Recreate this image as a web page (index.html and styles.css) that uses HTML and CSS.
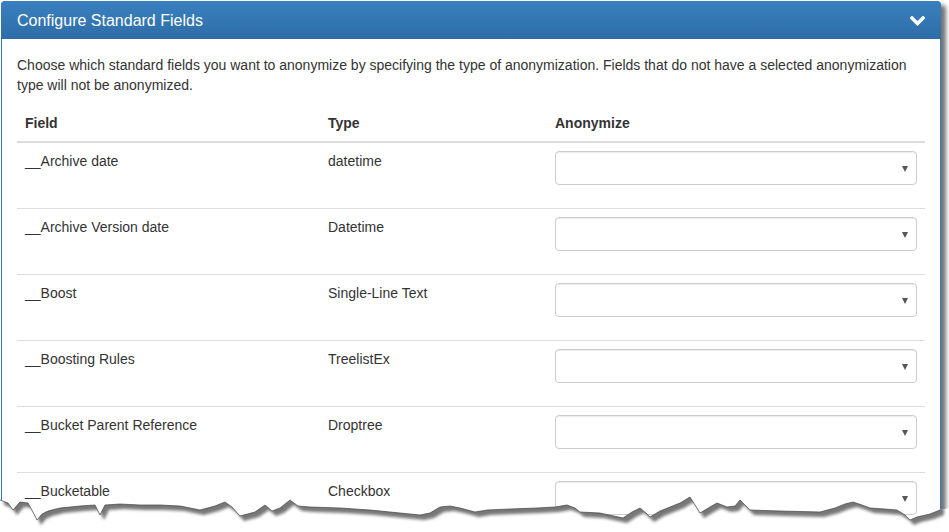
FILE: index.html
```html
<!DOCTYPE html>
<html lang="en">
<head>
<meta charset="utf-8">
<title>Configure Standard Fields</title>
<link rel="stylesheet" href="styles.css">
</head>
<body>
<div class="page">
  <div class="panel">
    <div class="panel-heading">
      <h3 class="panel-title">Configure Standard Fields</h3>
      <svg class="chevron" width="15" height="10" viewBox="0 0 15 10" aria-hidden="true">
        <polyline points="2,2 7.5,7.5 13,2" fill="none" stroke="#fff" stroke-width="3.4" stroke-linecap="square"/>
      </svg>
    </div>
    <div class="panel-body">
      <p class="intro">Choose which standard fields you want to anonymize by specifying the type of anonymization. Fields that do not have a selected anonymization type will not be anonymized.</p>
      <table class="fields">
        <colgroup>
          <col class="c-field"><col class="c-type"><col class="c-anon">
        </colgroup>
        <thead>
          <tr><th>Field</th><th>Type</th><th>Anonymize</th></tr>
        </thead>
        <tbody>
          <tr><td>__Archive date</td><td>datetime</td><td><div class="form-group"><div class="select-wrap"><select class="form-control"><option></option></select></div></div></td></tr>
          <tr><td>__Archive Version date</td><td>Datetime</td><td><div class="form-group"><div class="select-wrap"><select class="form-control"><option></option></select></div></div></td></tr>
          <tr><td>__Boost</td><td>Single-Line Text</td><td><div class="form-group"><div class="select-wrap"><select class="form-control"><option></option></select></div></div></td></tr>
          <tr><td>__Boosting Rules</td><td>TreelistEx</td><td><div class="form-group"><div class="select-wrap"><select class="form-control"><option></option></select></div></div></td></tr>
          <tr><td>__Bucket Parent Reference</td><td>Droptree</td><td><div class="form-group"><div class="select-wrap"><select class="form-control"><option></option></select></div></div></td></tr>
          <tr><td>__Bucketable</td><td>Checkbox</td><td><div class="form-group"><div class="select-wrap"><select class="form-control"><option></option></select></div></div></td></tr>
        </tbody>
      </table>
    </div>
  </div>
  <svg class="tear" width="949" height="54" viewBox="0 0 949 54" aria-hidden="true">
    <defs>
      <clipPath id="below">
        <polygon points="0,22 8,25 13,32 20,24 28,25 33,34 37,42 42,36 48,33 60,30 80,28 95,27 100,37 105,27 120,26 140,27 160,27 180,28 200,32 215,28 225,24 232,29 240,38 255,34 265,27 272,33 280,30 290,22 298,28 310,29 340,30 370,32 400,35 420,37 430,35 440,29 450,28 460,30 475,34 487,32 510,31 537,30 555,29 567,27 575,30 580,34 600,35 623,40 632,34 640,30 646,35 650,39 660,33 670,29 680,25 690,19 700,35 710,29 717,25 727,29 735,28 740,22 750,32 780,33 820,34 835,30 845,26 853,24 862,27 870,30 885,31 897,32 905,37 910,42 917,39 930,36 940,32 949,30 949,54 0,54"/>
      </clipPath>
      <filter id="soft" x="-5%" y="-50%" width="110%" height="200%">
        <feGaussianBlur stdDeviation="1.6"/>
      </filter>
    </defs>
    <polygon fill="#fff" points="0,22 8,25 13,32 20,24 28,25 33,34 37,42 42,36 48,33 60,30 80,28 95,27 100,37 105,27 120,26 140,27 160,27 180,28 200,32 215,28 225,24 232,29 240,38 255,34 265,27 272,33 280,30 290,22 298,28 310,29 340,30 370,32 400,35 420,37 430,35 440,29 450,28 460,30 475,34 487,32 510,31 537,30 555,29 567,27 575,30 580,34 600,35 623,40 632,34 640,30 646,35 650,39 660,33 670,29 680,25 690,19 700,35 710,29 717,25 727,29 735,28 740,22 750,32 780,33 820,34 835,30 845,26 853,24 862,27 870,30 885,31 897,32 905,37 910,42 917,39 930,36 940,32 949,30 949,54 0,54"/>
    <g clip-path="url(#below)">
      <polygon fill="#777" filter="url(#soft)" transform="translate(4,5)" points="0,22 8,25 13,32 20,24 28,25 33,34 37,42 42,36 48,33 60,30 80,28 95,27 100,37 105,27 120,26 140,27 160,27 180,28 200,32 215,28 225,24 232,29 240,38 255,34 265,27 272,33 280,30 290,22 298,28 310,29 340,30 370,32 400,35 420,37 430,35 440,29 450,28 460,30 475,34 487,32 510,31 537,30 555,29 567,27 575,30 580,34 600,35 623,40 632,34 640,30 646,35 650,39 660,33 670,29 680,25 690,19 700,35 710,29 717,25 727,29 735,28 740,22 750,32 780,33 820,34 835,30 845,26 853,24 862,27 870,30 885,31 897,32 905,37 910,42 917,39 930,36 940,32 940,-10 0,-10"/>
    </g>
    <polyline fill="none" stroke="#444" stroke-width="0.7" points="0,22 8,25 13,32 20,24 28,25 33,34 37,42 42,36 48,33 60,30 80,28 95,27 100,37 105,27 120,26 140,27 160,27 180,28 200,32 215,28 225,24 232,29 240,38 255,34 265,27 272,33 280,30 290,22 298,28 310,29 340,30 370,32 400,35 420,37 430,35 440,29 450,28 460,30 475,34 487,32 510,31 537,30 555,29 567,27 575,30 580,34 600,35 623,40 632,34 640,30 646,35 650,39 660,33 670,29 680,25 690,19 700,35 710,29 717,25 727,29 735,28 740,22 750,32 780,33 820,34 835,30 845,26 853,24 862,27 870,30 885,31 897,32 905,37 910,42 917,39 930,36 940,32"/>
  </svg>
</div>
</body>
</html>
```

FILE: styles.css
```css
html, body {
  margin: 0;
  padding: 0;
  background: #fff;
  overflow: hidden;
}
body {
  width: 949px;
  height: 532px;
  font-family: "Liberation Sans", Arial, sans-serif;
  font-size: 14px;
  line-height: 20px;
  color: #333;
}
.page {
  position: relative;
  width: 949px;
  height: 532px;
  overflow: hidden;
  padding: 1px 0 0 1px;
  box-sizing: border-box;
}
.panel {
  width: 940px;
  box-sizing: border-box;
  border: 1px solid #337ab7;
  border-radius: 4px;
  background: #fff;
  box-shadow: 5px 4px 4px rgba(0, 0, 0, 0.55);
}
.panel-heading {
  display: flex;
  align-items: center;
  justify-content: space-between;
  height: 38px;
  box-sizing: border-box;
  padding: 2px 15px 0 15px;
  margin: -1px -1px 0 -1px;
  border-radius: 4px 4px 0 0;
  background: linear-gradient(to bottom, #3a80bf 0%, #2e6ea8 100%);
  border-bottom: 1px solid #2e6da4;
  color: #fff;
}
.panel-title {
  margin: 0;
  padding-left: 1px;
  font-size: 16px;
  font-weight: normal;
  line-height: 18px;
  color: #fff;
}
.chevron {
  display: block;
  margin-right: 1px;
}
.panel-body {
  padding: 16px 15px 15px 15px;
}
.intro {
  margin: 0 0 10px 0;
}
.fields {
  width: 100%;
  border-collapse: collapse;
  border-spacing: 0;
  table-layout: fixed;
}
.c-field { width: 303px; }
.c-type { width: 227px; }
.c-anon { width: 378px; }
.fields th {
  text-align: left;
  font-weight: bold;
  padding: 8px;
  vertical-align: bottom;
  border-bottom: 2px solid #ddd;
}
.fields td {
  padding: 8px;
  vertical-align: top;
  border-top: 1px solid #ddd;
}
.fields tbody tr:first-child td {
  border-top: 0;
}
.form-group {
  margin-bottom: 15px;
}
.select-wrap {
  position: relative;
}
.select-wrap::after {
  content: "";
  position: absolute;
  right: 9px;
  top: 15px;
  border-left: 3.5px solid transparent;
  border-right: 3.5px solid transparent;
  border-top: 6px solid #555;
  pointer-events: none;
}
.form-control {
  display: block;
  width: 100%;
  height: 34px;
  box-sizing: border-box;
  padding: 6px 12px;
  font-family: inherit;
  font-size: 14px;
  color: #555;
  background: #fff;
  border: 1px solid #ccc;
  border-radius: 4px;
  box-shadow: inset 0 1px 1px rgba(0, 0, 0, 0.075);
  -webkit-appearance: none;
  appearance: none;
}
.tear {
  position: absolute;
  left: 0;
  top: 478px;
  display: block;
}
```
